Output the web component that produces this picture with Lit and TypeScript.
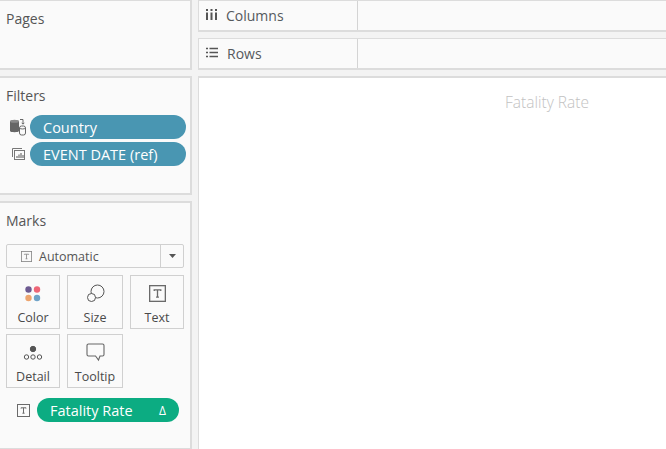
import { LitElement, html, css } from "lit";
import { customElement } from "lit/decorators.js";

const textBox = (size: number, stroke = "#6a6a6a") => html`<svg width=${size} height=${size} viewBox="0 0 13 13" fill="none"><rect x="0.5" y="0.5" width="12" height="12" stroke=${stroke}/><path d="M4 4.5V3.8H9V4.5M6.5 3.8V9.2M5.4 9.2H7.6" stroke=${stroke} stroke-width="1"/></svg>`;

@customElement("app-root")
export class AppRoot extends LitElement {
  static styles = css`
    :host { display: block; width: 666px; height: 449px; overflow: hidden; background: #f3f3f3; font-family: "Open Sans", sans-serif; color: #4f5357; }
    * { box-sizing: border-box; }
    .page { display: grid; grid-template-columns: 192px 1fr; column-gap: 6px; height: 449px; }
    .left { display: grid; grid-template-rows: 70px 119px 1fr; row-gap: 6px; height: 449px; }
    .right { display: grid; grid-template-rows: 32px 32px 1fr; row-gap: 6px; height: 449px; }
    .panel { background: #fafafa; border: 2px solid #dcdcdc; border-left: 0; padding: 8px 0 0 6px; font-size: 14px; line-height: 19px; position: relative; }
    .panel.pages { border-top-width: 1px; }
    .panel.marks { border-bottom-width: 1px; }
    .title { color: #555; }
    .pill { display: flex; align-items: center; height: 24px; border-radius: 12px; background: #4996b2; color: #fff; font-size: 14.5px; padding-left: 13px; width: 156px; white-space: nowrap; }
    .frow { display: flex; align-items: center; height: 24px; margin-top: 3px; }
    .frow:first-of-type { margin-top: 0; }
    .ficon { width: 24px; display: flex; justify-content: center; flex: none; }
    .filters-list { margin-top: 10px; display: flex; flex-direction: column; }
    .shelf { display: flex; background: #fafafa; border: 1px solid #dcdcdc; border-right: 0; border-bottom-width: 2px; }
    .shelf .label { width: 159px; border-right: 1px solid #d4d4d4; display: flex; align-items: center; padding-left: 7px; gap: 9px; font-size: 14px; color: #55595d; }
    .shelf .label svg { flex: none; margin-top: -2px; }
    .canvas { background: #fff; border: 2px solid #dcdcdc; border-right: 0; border-bottom: 0; border-left-width: 1px; display: flex; justify-content: center; padding: 13px 0 0 229px; }
    .vtitle { font-size: 15.5px; font-weight: 300; color: #c2c2c2; line-height: 22px; white-space: nowrap; height: 22px; }
    .dropdown { margin-top: 14px; width: 178px; height: 24px; background: #fafafa; border: 1px solid #d0d0d0; border-radius: 2px; display: flex; align-items: center; font-size: 12.5px; color: #555; }
    .dd-main { flex: 1; display: flex; align-items: center; gap: 7px; padding-left: 14px; }
    .dd-arrow { width: 23px; height: 100%; border-left: 1px solid #d0d0d0; display: flex; align-items: center; justify-content: center; }
    .cards { margin-top: 7px; display: grid; grid-template-columns: 54px 56px 54px; column-gap: 7px; row-gap: 5px; }
    .card { height: 54px; border: 1px solid #d0d0d0; display: flex; flex-direction: column; align-items: center; color: #4a4a4a; font-size: 12.5px; line-height: 17px; }
    .card .ic { height: 33px; display: flex; align-items: center; justify-content: center; flex: none; padding-top: 2px; }
    .mrow { display: flex; align-items: center; margin-top: 10px; padding-left: 11px; gap: 7px; }
    .mpill { width: 142px; height: 24px; border-radius: 12px; background: #0cac82; color: #fff; font-size: 14.5px; padding: 0 13px; display: flex; align-items: center; justify-content: space-between; white-space: nowrap; }
    .delta { font-size: 12px; }
  `;

  render() {
    return html`<div class="page">
      <div class="left">
        <div class="panel pages"><div class="title">Pages</div></div>
        <div class="panel">
          <div class="title">Filters</div>
          <div class="filters-list">
            <div class="frow">
              <span class="ficon"><svg width="18" height="18" viewBox="0 0 18 18" fill="none"><path d="M1 3.5C1 1.8 10 1.8 10 3.5V13C10 14.6 1 14.6 1 13Z" fill="#666"/><ellipse cx="5.5" cy="3.2" rx="4.5" ry="1.5" fill="#8a8a8a"/><path d="M11 1.5H14V6M12.7 4.8L14 6.2L15.3 4.8" stroke="#666" stroke-width="1"/><rect x="10.5" y="8" width="6" height="9" rx="2" fill="#fafafa" stroke="#666"/><path d="M10.5 10.3C12 11.2 15 11.2 16.5 10.3" stroke="#666"/></svg></span>
              <span class="pill">Country</span>
            </div>
            <div class="frow">
              <span class="ficon"><svg width="13" height="12" viewBox="0 0 13 12" fill="none"><path d="M0.5 9V0.5H10" stroke="#777"/><rect x="2.5" y="2.5" width="10" height="9" stroke="#777"/><path d="M5 10V8M7 10V6.5M9 10V5M11 10V7" stroke="#555"/></svg></span>
              <span class="pill">EVENT DATE (ref)</span>
            </div>
          </div>
        </div>
        <div class="panel marks">
          <div class="title">Marks</div>
          <div class="dropdown">
            <div class="dd-main">${textBox(11, "#888")}<span>Automatic</span></div>
            <div class="dd-arrow"><svg width="7" height="4" viewBox="0 0 7 4"><path d="M0 0H7L3.5 4Z" fill="#555"/></svg></div>
          </div>
          <div class="cards">
            <div class="card"><div class="ic"><svg width="18" height="18" viewBox="0 0 18 18"><circle cx="4.5" cy="4.5" r="3.2" fill="#6d5a91"/><circle cx="13" cy="4.5" r="3.2" fill="#ee6677"/><circle cx="4.5" cy="13" r="3.2" fill="#eda56f"/><circle cx="13" cy="13" r="3.2" fill="#6fa3c8"/></svg></div>Color</div>
            <div class="card"><div class="ic"><svg width="19" height="19" viewBox="0 0 19 19" fill="none" stroke="#555" stroke-width="1"><circle cx="11.5" cy="7.5" r="6.5"/><circle cx="5.5" cy="13.5" r="4" fill="#fafafa"/></svg></div>Size</div>
            <div class="card"><div class="ic">${textBox(17)}</div>Text</div>
            <div class="card"><div class="ic"><svg width="20" height="18" viewBox="0 0 20 18" fill="none" stroke="#555"><circle cx="10" cy="5" r="2.7" fill="#555"/><circle cx="3.5" cy="13" r="2.2"/><circle cx="10" cy="13" r="2.2"/><circle cx="16.5" cy="13" r="2.2"/></svg></div>Detail</div>
            <div class="card"><div class="ic"><svg width="19" height="19" viewBox="0 0 19 19" fill="none" stroke="#666" stroke-width="1.1"><path d="M2.5 1H16.5A1.5 1.5 0 0 1 18 2.5V11.5A1.5 1.5 0 0 1 16.5 13H14L12.5 17L9.5 13H2.5A1.5 1.5 0 0 1 1 11.5V2.5A1.5 1.5 0 0 1 2.5 1Z"/></svg></div>Tooltip</div>
          </div>
          <div class="mrow">
            ${textBox(13, "#6a6a6a")}
            <div class="mpill"><span>Fatality Rate</span><span class="delta">Δ</span></div>
          </div>
        </div>
      </div>
      <div class="right">
        <div class="shelf"><div class="label"><svg width="11" height="11" viewBox="0 0 11 11"><path d="M1 3.5V11M5.5 3.5V11M10 3.5V11" stroke="#555" stroke-width="2"/><path d="M1 0V2M5.5 0V2M10 0V2" stroke="#555" stroke-width="2"/></svg>Columns</div></div>
        <div class="shelf"><div class="label"><svg width="12" height="11" viewBox="0 0 12 11"><path d="M0 1.5H2M0 5.5H2M0 9.5H2M3.5 1.5H12M3.5 5.5H12M3.5 9.5H12" stroke="#555" stroke-width="1.4"/></svg>Rows</div></div>
        <div class="canvas"><div class="vtitle">Fatality Rate</div></div>
      </div>
    </div>`;
  }
}
